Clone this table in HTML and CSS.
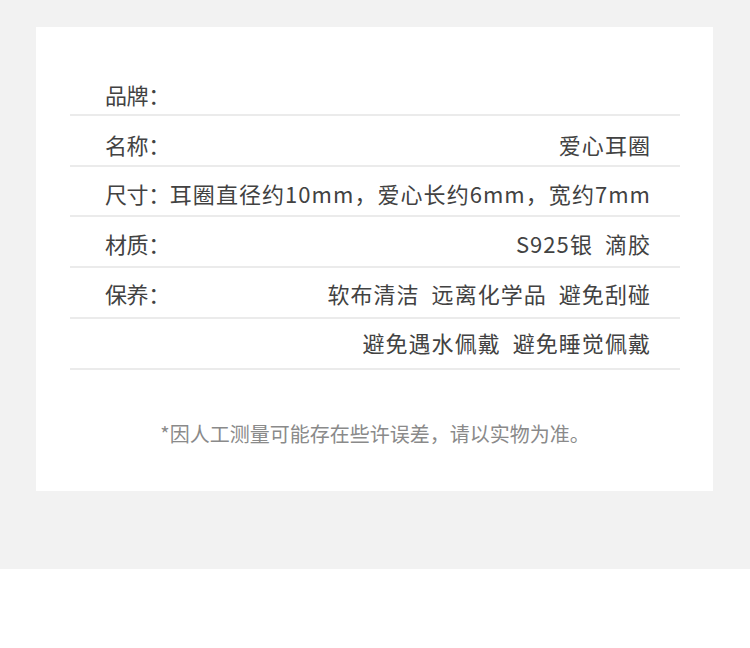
FILE: index.html
```html
<!DOCTYPE html>
<html lang="zh">
<head>
<meta charset="utf-8">
<link rel="stylesheet" href="styles.css">
</head>
<body>
<div class="stage">
  <div class="card">
    <div class="row"><span class="label">品牌：</span><span class="value"></span></div>
    <div class="row"><span class="label">名称：</span><span class="value">爱心耳圈</span></div>
    <div class="row"><span class="label">尺寸：</span><span class="value">耳圈直径约10mm，爱心长约6mm，宽约7mm</span></div>
    <div class="row"><span class="label">材质：</span><span class="value">S925银&nbsp;&nbsp;滴胶</span></div>
    <div class="row"><span class="label">保养：</span><span class="value">软布清洁&nbsp;&nbsp;远离化学品&nbsp;&nbsp;避免刮碰</span></div>
    <div class="row"><span class="label"></span><span class="value">避免遇水佩戴&nbsp;&nbsp;避免睡觉佩戴</span></div>
    <p class="note">*因人工测量可能存在些许误差，请以实物为准。</p>
  </div>
</div>
</body>
</html>
```
FILE: styles.css
```css
html, body {
  margin: 0;
  padding: 0;
  background: #ffffff;
}
body {
  font-family: "Noto Sans CJK SC", "Noto Sans", sans-serif;
  color: #424242;
}
.stage {
  background: #f2f2f2;
  height: 569px;
  padding-top: 27px;
  box-sizing: border-box;
}
.card {
  background: #ffffff;
  margin-left: 36px;
  width: 677px;
  height: 464px;
  box-sizing: border-box;
  padding: 38px 33px 0 34px;
}
.row {
  box-sizing: border-box;
  height: 50.8px;
  border-bottom: 2px solid #ebebeb;
  display: flex;
  justify-content: space-between;
  align-items: flex-end;
  padding: 0 30px 10px 35px;
  font-size: 22px;
  line-height: 22px;
}
.row:nth-child(1) { padding-bottom: 9px; }
.row:nth-child(2) { padding-bottom: 10px; }
.row:nth-child(3) { padding-bottom: 11px; }
.row:nth-child(4) { padding-bottom: 12px; }
.row:nth-child(5) { padding-bottom: 13px; }
.row:nth-child(6) { padding-bottom: 15px; }
.label, .value {
  white-space: nowrap;
}
.label {
  letter-spacing: -0.4px;
}
.value {
  letter-spacing: 1.05px;
  margin-right: -1px;
}
.note {
  margin: 53px 0 0;
  text-align: center;
  font-size: 20px;
  line-height: 22px;
  color: #8a8a8a;
}
```
